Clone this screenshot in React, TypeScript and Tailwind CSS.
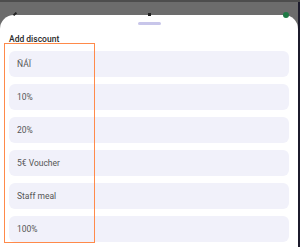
const discounts = ["ÑÁÏ", "10%", "20%", "5€ Voucher", "Staff meal", "100%"];

export default function App() {
  return (
    <div
      className="relative flex h-[247px] w-[300px] overflow-hidden bg-[#6c6c6c]"
      style={{ fontFamily: "Roboto, 'Noto Sans', sans-serif" }}
    >
      {/* dimmed app behind the sheet */}
      <div className="absolute left-0 right-0 top-0 h-[2px] bg-[#4d4d4d]" />
      <div className="absolute left-[14px] top-[12px] h-[4px] w-[2px] rotate-45 bg-[#222]" />
      <div className="absolute left-[148px] top-[13px] h-[3px] w-[3px] bg-[#222]" />
      <div className="absolute left-[283px] top-[12px] h-[6px] w-[6px] rounded-full bg-[#1f7a45]" />

      <div className="flex flex-1 flex-col">
        <div className="h-[15px]" />
        <div className="flex flex-1 flex-col rounded-t-[14px] bg-white">
          <div className="flex justify-center pt-[7px]">
            <div className="h-[3px] w-[23px] rounded-full bg-[#c8c6ea]" />
          </div>
          <div className="px-[9px] pt-[9px] text-[8.5px] font-medium leading-[11px] text-[#2a2a2a]">
            Add discount
          </div>
          <div className="flex flex-col gap-[7px] px-[9px] pt-[6px]">
            {discounts.map((d) => (
              <div
                key={d}
                className="flex h-[26px] items-center rounded-[6px] bg-[#f1f1fa] px-[8px] text-[8.5px] text-[#555]"
              >
                {d}
              </div>
            ))}
          </div>
        </div>
      </div>
      <div className="w-[2px] bg-[#1c1b2c]" />

      {/* annotation box */}
      <div className="pointer-events-none absolute left-[4px] top-[43px] h-[200px] w-[91px] border-[1.5px] border-[#ff8a4a]" />
    </div>
  );
}
